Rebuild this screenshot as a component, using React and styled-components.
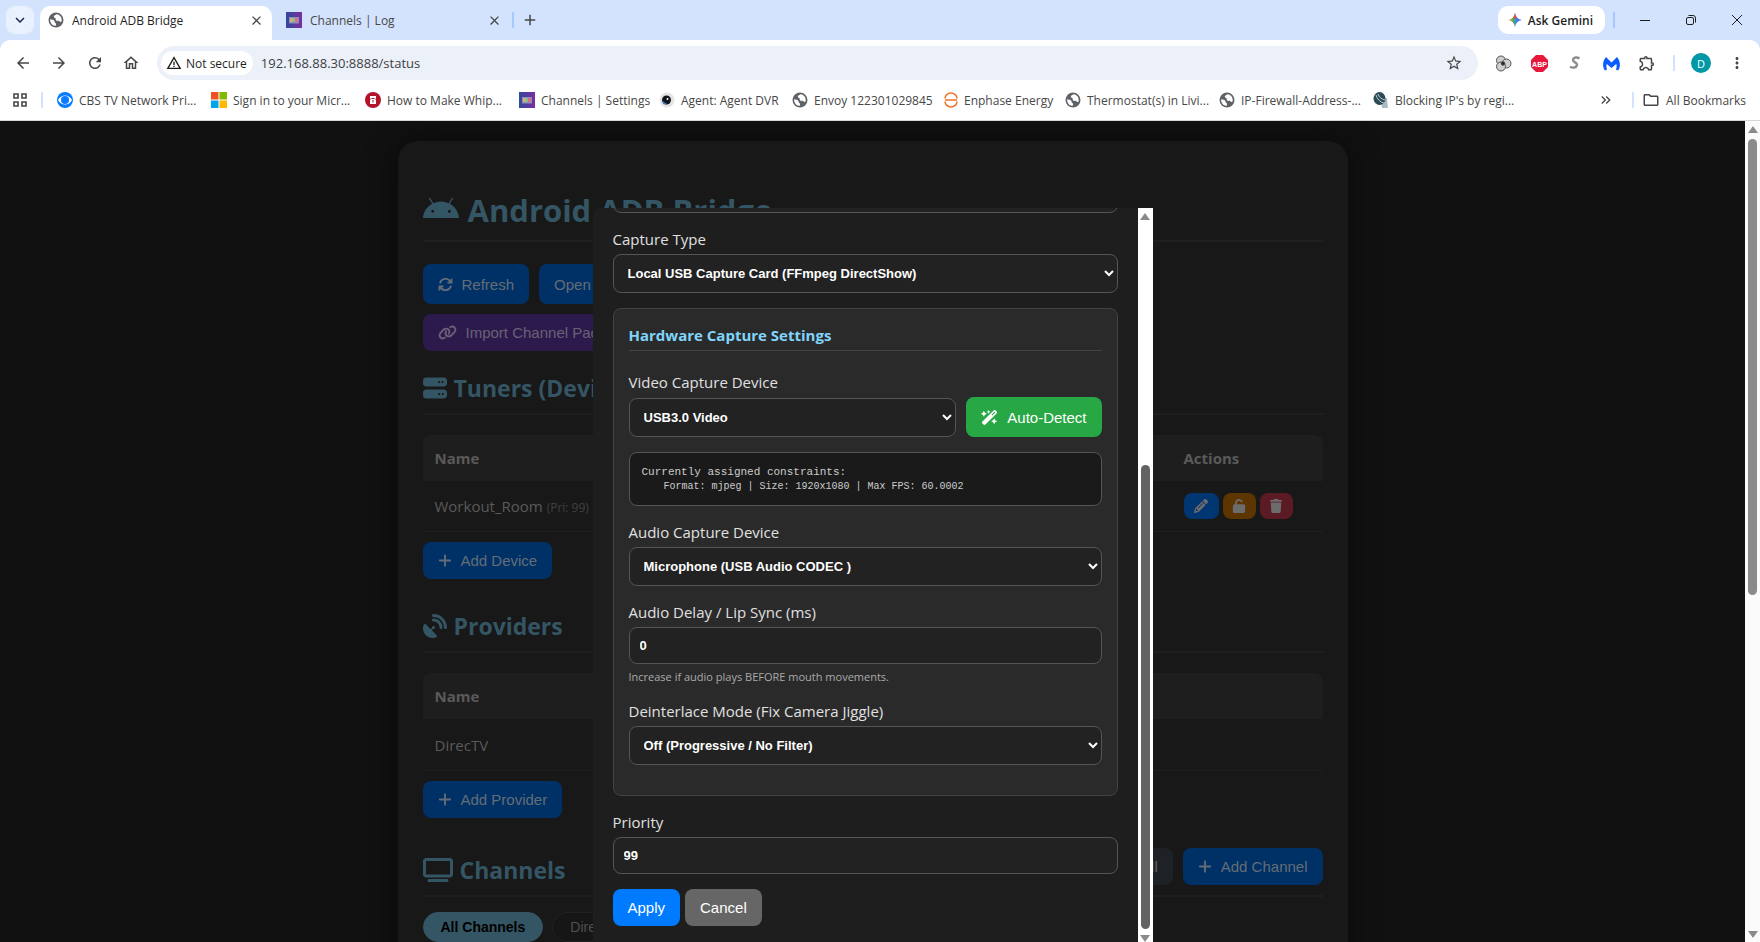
import React from 'react';
import styled, { createGlobalStyle } from 'styled-components';
import {
  FaAndroid,
  FaArrowsRotate,
  FaLink,
  FaPencil,
  FaPlus,
  FaSatelliteDish,
  FaServer,
  FaTrash,
  FaTv,
  FaUnlock,
  FaWandMagicSparkles,
} from 'react-icons/fa6';
import {
  MdAdd,
  MdArrowBack,
  MdArrowForward,
  MdClose,
  MdKeyboardArrowDown,
  MdKeyboardDoubleArrowRight,
  MdMoreVert,
  MdOutlineExtension,
  MdOutlineFolder,
  MdOutlineHome,
  MdRefresh,
  MdStarBorder,
  MdWarningAmber,
} from 'react-icons/md';

const uiFont = '"Open Sans", "Noto Sans", sans-serif';
const arial = '"Liberation Sans", Arial, sans-serif';

const GlobalStyle = createGlobalStyle`
  * {
    box-sizing: border-box;
  }

  body {
    margin: 0;
    font-family: ${uiFont};
    font-size: 15px;
    background: #111;
  }

  button {
    border: 0;
    margin: 0;
    cursor: pointer;
  }
`;

const Window = styled.div`
  height: 100vh;
  display: flex;
  flex-direction: column;
  overflow: hidden;
`;

/* browser chrome */

const TabStrip = styled.div`
  flex: none;
  display: flex;
  align-items: center;
  height: 40px;
  padding: 0 15px 0 6px;
  background: #d3e3fd;
  color: #1f1f1f;
  font-size: 12px;
`;

const TabSearch = styled.button`
  display: flex;
  align-items: center;
  justify-content: center;
  width: 28px;
  height: 28px;
  padding: 0;
  border-radius: 9px;
  background: #e9f0fe;
  color: #1b2a4e;
  font-size: 18px;

  svg {
    stroke: currentColor;
  }
`;

const Tab = styled.div`
  display: flex;
  align-items: center;
  align-self: flex-end;
  gap: 8px;
  width: ${({ $active }) => ($active ? '232px' : '234px')};
  height: 34px;
  margin-left: 6px;
  padding: 0 8px 6px;
  border-radius: 10px 10px 0 0;
  background: ${({ $active }) => ($active ? '#fff' : 'transparent')};
  color: ${({ $active }) => ($active ? '#1f1f1f' : '#474747')};

  > span {
    flex: 1;
  }
`;

const GlyphButton = styled.button`
  display: flex;
  align-items: center;
  justify-content: center;
  width: ${({ $width }) => $width || 36}px;
  height: 28px;
  padding: 0;
  background: none;
  color: #474747;
  font-size: ${({ $size }) => $size || 18}px;
`;

const Divider = styled.span`
  flex: none;
  width: 2px;
  height: 16px;
  margin: 0 ${({ $gap }) => $gap || 0}px;
  background: ${({ $strong }) => ($strong ? '#a8c7fa' : '#d3e3fd')};
`;

const Spacer = styled.span`
  flex: 1;
`;

const Gemini = styled.button`
  display: flex;
  align-items: center;
  gap: 6px;
  height: 28px;
  padding: 0 12px 0 10px;
  border-radius: 10px;
  background: #fff;
  color: #1f1f1f;
  font-family: ${uiFont};
  font-size: 12px;
  font-weight: 600;
`;

const WindowButtons = styled.div`
  display: flex;
  gap: 30px;
  margin-left: 14px;
`;

const ToolbarWrap = styled.div`
  flex: none;
  background: #d3e3fd;
`;

const Toolbar = styled.div`
  display: flex;
  align-items: center;
  height: 46px;
  padding: 0 5px;
  border-radius: 10px 10px 0 0;
  background: #fff;
`;

const Omnibox = styled.div`
  flex: 1;
  display: flex;
  align-items: center;
  height: 34px;
  margin: 0 7px 0 8px;
  padding: 0 6px 0 4px;
  border-radius: 17px;
  background: #ecf0f9;
`;

const SecurityChip = styled.button`
  display: flex;
  align-items: center;
  gap: 4px;
  height: 24px;
  padding: 0 6px 0 5px;
  border-radius: 12px;
  background: #fff;
  color: #1f1f1f;
  font-family: ${uiFont};
  font-size: 12px;
  font-weight: 500;
`;

const Address = styled.input`
  flex: 1;
  margin-left: 6px;
  padding: 0 2px;
  border: 0;
  outline: 0;
  background: transparent;
  color: #3c3f43;
  font-family: ${uiFont};
  font-size: 13px;
`;

const Avatar = styled.button`
  width: 20px;
  height: 20px;
  margin: 0 8px;
  padding: 0;
  border-radius: 50%;
  background: #0097a7;
  color: #fff;
  font-family: ${uiFont};
  font-size: 11px;
`;

const Bookmarks = styled.nav`
  flex: none;
  display: flex;
  align-items: center;
  height: 35px;
  padding: 0 14px 6px 13px;
  border-bottom: 1px solid #d5d5d5;
  background: #fff;
  color: #474747;
  font-size: 12px;
`;

const Bookmark = styled.a`
  display: flex;
  align-items: center;
  gap: 6px;
  width: ${({ $width }) => ($width ? `${$width}px` : 'auto')};
  color: inherit;
  text-decoration: none;
  white-space: nowrap;

  svg {
    flex: none;
  }
`;

/* page */

const Viewport = styled.div`
  flex: 1;
  min-height: 0;
  display: flex;
`;

const Page = styled.main`
  position: relative;
  flex: 1;
  overflow: hidden;
  padding: 20px 0;
  background: #111;
`;

const Container = styled.div`
  max-width: 950px;
  min-height: 1200px;
  margin: 0 auto;
  padding: 25px;
  border-radius: 20px;
  background: #181818;
  box-shadow: 0 0 30px rgba(0, 0, 0, 0.5);
  color: #5a5a5a;
`;

const AndroidIcon = styled(FaAndroid)`
  width: 36px;
  height: 32px;
`;

const ServerIcon = styled(FaServer)`
  width: 24px;
  height: 24px;
`;

const ProvidersIcon = styled(FaSatelliteDish)`
  width: 24px;
  height: 24px;
`;

const TvIcon = styled(FaTv)`
  width: 30px;
  height: 24px;
`;

const PlusIcon = styled(FaPlus)`
  width: 14px;
`;

const LinkIcon = styled(FaLink)`
  width: 19px;
`;

const WandIcon = styled(FaWandMagicSparkles)`
  width: 17px;
`;

const Title = styled.h1`
  display: flex;
  align-items: center;
  gap: 9px;
  height: 56px;
  margin: 20px 0 22px;
  padding-bottom: 6px;
  border-bottom: 2px solid #1f1f1f;
  color: #345564;
  font-size: 31px;
`;

const SectionTitle = styled.h2`
  display: flex;
  align-items: center;
  gap: 7px;
  height: ${({ $tall }) => ($tall ? 49 : 44)}px;
  margin: ${({ $top }) => $top}px 0 ${({ $bottom }) => $bottom || 20}px;
  padding-bottom: ${({ $tall }) => ($tall ? 4 : 9)}px;
  border-bottom: 2px solid #1f1f1f;
  color: #345564;
  font-size: 23px;
`;

const ButtonRow = styled.div`
  display: flex;
  gap: 10px;
  margin-bottom: 10px;
`;

const tones = {
  blue: ['#003166', '#646d77'],
  purple: ['#2c1a4d', '#6a6175'],
  slate: ['#1e2125', '#5c6064'],
  green: ['#28a745', '#fff'],
  primary: ['#007bff', '#fff'],
  grey: ['#666', '#fff'],
};

const Button = styled.button`
  display: flex;
  align-items: center;
  justify-content: center;
  gap: 9px;
  height: ${({ $large }) => ($large ? 40 : 37)}px;
  padding: 0 15px;
  border-radius: 8px;
  background: ${({ $tone }) => tones[$tone][0]};
  color: ${({ $tone }) => tones[$tone][1]};
  font-family: ${arial};
  font-size: 15px;
  font-weight: normal;
  white-space: nowrap;
`;

const LinkButton = styled(Button).attrs({ as: 'a', href: '#' })`
  text-decoration: none;
`;

const HeaderButtons = styled.div`
  display: flex;
  align-self: flex-start;
  gap: 10px;
  margin-left: auto;
`;

const Table = styled.table`
  width: 100%;
  border-collapse: separate;
  border-spacing: 0;
  margin-bottom: 10px;

  th {
    height: 46px;
    padding: 0 12px;
    background: #1e1e1e;
    text-align: left;
  }

  th:first-child {
    border-radius: 8px 0 0 0;
  }

  th:last-child {
    width: 151px;
    border-radius: 0 8px 0 0;
  }

  td {
    height: ${({ $rowHeight }) => $rowHeight}px;
    padding: 0 12px;
    border-bottom: 1px solid #1f1f1f;
  }

  small {
    color: #404040;
    font-size: 12px;
  }
`;

const Actions = styled.div`
  display: flex;
  gap: 4px;
`;

const IconButton = styled.button`
  display: flex;
  align-items: center;
  justify-content: center;
  width: ${({ $wide }) => ($wide ? 35 : 33)}px;
  height: 26px;
  padding: 0;
  border-radius: 8px;
  background: ${({ $color }) => $color};
  color: #6c6c6c;
  font-size: 14px;
`;

const Chips = styled.div`
  display: flex;
  gap: 9px;
`;

const Chip = styled.button`
  height: 30px;
  padding: 0 17px;
  border: 1px solid ${({ $active }) => ($active ? '#345564' : '#222')};
  border-radius: 15px;
  background: ${({ $active }) => ($active ? '#345564' : '#161616')};
  color: ${({ $active }) => ($active ? '#000' : '#505050')};
  font-family: ${arial};
  font-size: 14px;
  font-weight: ${({ $active }) => ($active ? 'bold' : 'normal')};
`;

/* modal */

const Backdrop = styled.div`
  position: absolute;
  inset: 0;
  display: flex;
  justify-content: center;
  padding-top: 87px;
`;

const Modal = styled.div`
  display: flex;
  width: 560px;
  border-radius: 8px 0 0 0;
  overflow: hidden;
  background: #1e1e1e;
  color: #e0e0e0;
`;

const Form = styled.form`
  flex: 1;
  display: flex;
  flex-direction: column;
  justify-content: flex-end;
  overflow: hidden;
  padding: 0 20px 16px;
`;

const Field = styled.div`
  flex: none;
  display: flex;
  flex-direction: column;
  margin-bottom: 15px;
`;

const Label = styled.label`
  margin-bottom: 3px;
  line-height: 23px;
`;

const Input = styled.input`
  width: 100%;
  height: 37px;
  padding: 0 10px;
  border: 1px solid #555;
  border-radius: 8px;
  background: #222;
  color: #fff;
  font-family: ${arial};
  font-size: 13px;
  font-weight: bold;
`;

const Select = styled.select`
  width: 100%;
  height: 39px;
  padding: 0 10px;
  border: 1px solid #555;
  border-radius: 8px;
  background: #222;
  color: #fff;
  font-family: ${arial};
  font-size: 13px;
  font-weight: bold;
`;

const Panel = styled.section`
  flex: none;
  margin-bottom: 15px;
  padding: 15px;
  border: 1px solid #444;
  border-radius: 8px;
  background: #2a2a2a;
`;

const PanelTitle = styled.h3`
  margin: 0 0 20px;
  padding-bottom: 3px;
  border-bottom: 1px solid #444;
  color: #81d4fa;
  font-size: 15px;
  line-height: 23px;
`;

const Inline = styled.div`
  display: flex;
  align-items: flex-end;
  gap: 10px;
`;

const Constraints = styled.div`
  margin-bottom: 15px;
  padding: 12px 12px 11px;
  border: 1px solid #555;
  border-radius: 8px;
  background: #1a1a1a;
  color: #ccc;
  font-family: "Liberation Mono", monospace;
  font-size: 11px;
  line-height: 14px;

  p {
    margin: 0;
  }

  p + p {
    padding-left: 22px;
    font-size: 10px;
    line-height: 15px;
  }
`;

const Hint = styled.small`
  margin-top: 5px;
  color: #aaa;
  font-size: 11px;
  line-height: 16px;
`;

const FormButtons = styled.div`
  flex: none;
  display: flex;
  gap: 5px;
`;

/* scrollbars */

const Track = styled.div`
  flex: none;
  display: flex;
  flex-direction: column;
  align-items: center;
  width: 15px;
  padding: 5px 0 ${({ $page }) => ($page ? 4 : 0)}px;
  background: ${({ $page }) => ($page ? '#fbfbfb' : '#fff')};
`;

const Arrow = styled.i`
  border: 5px solid transparent;
  border-top: ${({ $down }) => ($down ? '7px solid #8b8b8b' : '0')};
  border-bottom: ${({ $down }) => ($down ? '0' : '7px solid #8b8b8b')};
`;

const Thumb = styled.div`
  flex: ${({ $size }) => $size};
  width: 9px;
  margin: 6px 0;
  border-radius: 5px;
  background: ${({ $color }) => $color};
`;

const Gap = styled.div`
  flex: ${({ $size }) => $size};
`;

const Globe = () => (
  <svg width="16" height="16" viewBox="0 0 16 16">
    <circle cx="8" cy="8" r="7.500" fill="#5f6368" />
    <path
      fill="#fff"
      d="M8.600 2.200C7.500 3 6 3.200 5.800 4.400c-.2 1.400 1.600 1.200 2 2.200.3.900-.6 1.300.4 2 1.200.8 2.600-.3 3.400.8.500.8 1.500.6 2.100-.2.500-3.600-1.700-6.400-5.100-7z"
    />
    <path
      fill="#fff"
      d="M2.200 7.200c1.300.2 3.200.3 4 1.500.6 1 .2 1.800 1.200 2.300.9.500.9 1.200.3 2.800-3.500 0-6-3.200-5.500-6.600z"
    />
  </svg>
);

const ChannelsIcon = () => (
  <svg width="16" height="16" viewBox="0 0 16 16">
    <defs>
      <linearGradient id="channels" x1="0" x2="1">
        <stop offset="0" stopColor="#2f4a9c" />
        <stop offset="1" stopColor="#7b2fa0" />
      </linearGradient>
    </defs>
    <path fill="url(#channels)" d="M0 0h16v16H0z" />
    <path fill="#8b8fb8" d="M3 5h10v6.500H3z" />
    <path fill="#c9b27c" d="M4 6h3v4H4z" />
    <path fill="#7fc09c" d="M7 6h2v4H7z" />
    <path fill="#d8708c" d="M9 6h3v4H9z" />
  </svg>
);

const CbsIcon = () => (
  <svg width="16" height="16" viewBox="0 0 16 16">
    <circle cx="8" cy="8" r="8" fill="#0a7cff" />
    <path fill="#fff" d="M1 8c3-6 11-6 14 0-3 6-11 6-14 0z" />
    <circle cx="8" cy="8" r="4" fill="#0a7cff" />
  </svg>
);

const MicrosoftIcon = () => (
  <svg width="16" height="16" viewBox="0 0 16 16">
    <path fill="#f25022" d="M0 0h7.500v7.500H0z" />
    <path fill="#7fba00" d="M8.500 0H16v7.500H8.500z" />
    <path fill="#00a4ef" d="M0 8.500h7.500V16H0z" />
    <path fill="#ffb900" d="M8.500 8.500H16V16H8.500z" />
  </svg>
);

const RecipeIcon = () => (
  <svg width="16" height="16" viewBox="0 0 16 16">
    <circle cx="8" cy="8" r="8" fill="#b3122b" />
    <path fill="#fff" d="M5 4h6v2.500l-1 .5 1 1v4H5V8l1-1-1-.5z" />
    <path stroke="#b3122b" d="M6.500 6.500h3M8 8v2.500" />
  </svg>
);

const AgentIcon = () => (
  <svg width="16" height="16" viewBox="0 0 16 16">
    <circle cx="8" cy="8" r="7.500" fill="#e4e4e4" />
    <circle cx="7.500" cy="8" r="4.500" fill="#10151c" />
    <path stroke="#2f78c8" strokeWidth="1.500" fill="none" d="M4 9.500a4 4 0 0 0 3.500 2.500" />
    <circle cx="8.500" cy="7" r="1" fill="#fff" />
  </svg>
);

const EnphaseIcon = () => (
  <svg width="14" height="16" viewBox="0 0 14 16" fill="none" stroke="#f37321" strokeWidth="1.500">
    <path d="M1 6.500a6 5.500 0 0 1 12 0M1 8h12M1 9.500a6 5.500 0 0 0 12 0" />
  </svg>
);

const DishIcon = () => (
  <svg width="16" height="16" viewBox="0 0 16 16">
    <path fill="#a9bcc4" d="M8 9l6-3 1 10H9z" />
    <ellipse cx="6.500" cy="6.500" rx="6" ry="6.500" fill="#2d4a57" />
    <path stroke="#b9c9d0" fill="none" d="M3 3c1 4 4 7 8 8M5 2c1 3 3 5 7 6" />
  </svg>
);

const GeminiIcon = () => (
  <svg width="14" height="14" viewBox="0 0 14 14">
    <defs>
      <linearGradient id="gemini" x1="0" y1="0" x2="1" y2="0">
        <stop offset="0" stopColor="#f5b400" />
        <stop offset="0.400" stopColor="#4fa66c" />
        <stop offset="0.600" stopColor="#3c83f5" />
        <stop offset="1" stopColor="#3c70e8" />
      </linearGradient>
    </defs>
    <path fill="url(#gemini)" d="M7 0c.8 4 3 6.200 7 7-4 .8-6.200 3-7 7-.8-4-3-6.200-7-7 4-.8 6.200-3 7-7z" />
    <path fill="#ea4d45" d="M7 0c.5 2.500 1.200 4 2.200 4.900L7 5.500 4.800 4.900C5.800 4 6.500 2.500 7 0z" />
  </svg>
);

const AppsIcon = () => (
  <svg width="14" height="14" viewBox="0 0 14 14" fill="none" stroke="#474747" strokeWidth="1.600">
    <path d="M1 1h4v4H1zM9 1h4v4H9zM1 9h4v4H1zM9 9h4v4H9z" />
  </svg>
);

const SwirlIcon = () => (
  <svg width="17" height="17" viewBox="0 0 17 17" fill="#cfcfcf" stroke="#555">
    <circle cx="6" cy="5.500" r="4.500" />
    <circle cx="11.500" cy="8.500" r="4.500" />
    <circle cx="6" cy="11.500" r="4.500" />
    <circle cx="8" cy="8.500" r="1.800" fill="#222" />
  </svg>
);

const AbpIcon = () => (
  <svg width="17" height="17" viewBox="0 0 17 17">
    <path fill="#e6193c" d="M5 0h7l5 5v7l-5 5H5l-5-5V5z" />
    <text x="8.500" y="11.500" textAnchor="middle" fill="#fff" fontFamily={arial} fontSize="7" fontWeight="bold">
      ABP
    </text>
  </svg>
);

const ScriptIcon = () => (
  <svg width="12" height="14" viewBox="0 0 12 14" fill="none" stroke="#8e8e8e" strokeWidth="2.400">
    <path d="M10.500 2.500C8 .8 4.500 1.200 4 3.800c-.4 2.700 4.500 2.500 4 5.200-.5 2.800-4.500 3.300-7 1.800" />
  </svg>
);

const MalwareIcon = () => (
  <svg width="17" height="15" viewBox="0 0 17 15">
    <path
      fill="#0a5cff"
      d="M3 1l5.500 5.500L14 1c3 3.500 4 8.500 1.500 13-1 .5-2 0-2.500-.5.8-2 .8-4 .2-5.500L8.500 12 3.800 8c-.6 1.500-.6 3.500.2 5.500-.5.5-1.500 1-2.500.5C-1 9.500 0 4.500 3 1z"
    />
  </svg>
);

const MinimizeIcon = () => (
  <svg width="16" height="16" stroke="#1f1f1f" fill="none">
    <path d="M3 8.500h10" />
  </svg>
);

const RestoreIcon = () => (
  <svg width="16" height="16" stroke="#1f1f1f" fill="none">
    <rect x="3.500" y="5.500" width="7" height="7" rx="1.500" />
    <path d="M5.500 3.500h4.500a2.500 2.500 0 0 1 2.500 2.500v4.500" />
  </svg>
);

const CloseIcon = () => (
  <svg width="16" height="16" stroke="#1f1f1f" fill="none">
    <path d="M3 3l10 10M13 3L3 13" />
  </svg>
);

const bookmarks = [
  { label: 'CBS TV Network Pri...', Icon: CbsIcon, width: 154 },
  { label: 'Sign in to your Micr...', Icon: MicrosoftIcon, width: 154 },
  { label: 'How to Make Whip...', Icon: RecipeIcon, width: 154 },
  { label: 'Channels | Settings', Icon: ChannelsIcon, width: 140 },
  { label: 'Agent: Agent DVR', Icon: AgentIcon, width: 133 },
  { label: 'Envoy 122301029845', Icon: Globe, width: 152 },
  { label: 'Enphase Energy', Icon: EnphaseIcon, width: 121 },
  { label: 'Thermostat(s) in Livi...', Icon: Globe, width: 154 },
  { label: 'IP-Firewall-Address-...', Icon: Globe, width: 154 },
  { label: "Blocking IP's by regi...", Icon: DishIcon, width: 154 },
];

const BrowserChrome = () => (
  <>
    <TabStrip>
      <TabSearch aria-label="Search tabs">
        <MdKeyboardArrowDown />
      </TabSearch>
      <Tab $active>
        <Globe />
        <span>Android ADB Bridge</span>
        <GlyphButton $width={16} $size={15} aria-label="Close tab">
          <MdClose />
        </GlyphButton>
      </Tab>
      <Tab>
        <ChannelsIcon />
        <span>Channels | Log</span>
        <GlyphButton $width={20} $size={15} aria-label="Close tab">
          <MdClose />
        </GlyphButton>
      </Tab>
      <Divider $strong />
      <GlyphButton $width={32} aria-label="New tab">
        <MdAdd />
      </GlyphButton>
      <Spacer />
      <Gemini>
        <GeminiIcon />
        Ask Gemini
      </Gemini>
      <Divider $gap={8} $strong />
      <WindowButtons>
        <GlyphButton $width={16} aria-label="Minimize">
          <MinimizeIcon />
        </GlyphButton>
        <GlyphButton $width={16} aria-label="Restore">
          <RestoreIcon />
        </GlyphButton>
        <GlyphButton $width={16} aria-label="Close">
          <CloseIcon />
        </GlyphButton>
      </WindowButtons>
    </TabStrip>
    <ToolbarWrap>
      <Toolbar>
        <GlyphButton aria-label="Back">
          <MdArrowBack />
        </GlyphButton>
        <GlyphButton aria-label="Forward">
          <MdArrowForward />
        </GlyphButton>
        <GlyphButton aria-label="Reload">
          <MdRefresh />
        </GlyphButton>
        <GlyphButton aria-label="Home">
          <MdOutlineHome />
        </GlyphButton>
        <Omnibox>
          <SecurityChip>
            <MdWarningAmber size={16} />
            Not secure
          </SecurityChip>
          <Address aria-label="Address" defaultValue="192.168.88.30:8888/status" />
          <GlyphButton aria-label="Bookmark this page">
            <MdStarBorder />
          </GlyphButton>
        </Omnibox>
        <GlyphButton aria-label="Extension">
          <SwirlIcon />
        </GlyphButton>
        <GlyphButton aria-label="Extension">
          <AbpIcon />
        </GlyphButton>
        <GlyphButton aria-label="Extension">
          <ScriptIcon />
        </GlyphButton>
        <GlyphButton aria-label="Extension">
          <MalwareIcon />
        </GlyphButton>
        <GlyphButton aria-label="Extensions">
          <MdOutlineExtension />
        </GlyphButton>
        <Divider $gap={8} />
        <Avatar>D</Avatar>
        <GlyphButton aria-label="Menu">
          <MdMoreVert />
        </GlyphButton>
      </Toolbar>
    </ToolbarWrap>
    <Bookmarks>
      <AppsIcon />
      <Divider $gap={14} />
      {bookmarks.map(({ label, Icon, width }) => (
        <Bookmark href="#" key={label} $width={width}>
          <Icon />
          {label}
        </Bookmark>
      ))}
      <Spacer />
      <GlyphButton $size={16} aria-label="More bookmarks">
        <MdKeyboardDoubleArrowRight />
      </GlyphButton>
      <Divider $gap={8} />
      <Bookmark href="#">
        <MdOutlineFolder size={18} />
        All Bookmarks
      </Bookmark>
    </Bookmarks>
  </>
);

const StatusPage = () => (
  <Container>
    <Title>
      <AndroidIcon />
      Android ADB Bridge
    </Title>
    <ButtonRow>
      <Button $tone="blue" $large>
        <FaArrowsRotate />
        Refresh
      </Button>
      <LinkButton $tone="blue" $large>
        Open
      </LinkButton>
    </ButtonRow>
    <ButtonRow>
      <Button $tone="purple">
        <LinkIcon />
        Import Channel Pack
      </Button>
    </ButtonRow>
    <SectionTitle $top={20}>
      <ServerIcon />
      Tuners (Devices)
    </SectionTitle>
    <Table $rowHeight={51}>
      <thead>
        <tr>
          <th>Name</th>
          <th>Actions</th>
        </tr>
      </thead>
      <tbody>
        <tr>
          <td>
            Workout_Room <small>(Pri: 99)</small>
          </td>
          <td>
            <Actions>
              <IconButton $wide $color="#003672" aria-label="Edit">
                <FaPencil />
              </IconButton>
              <IconButton $color="#5c3500" aria-label="Unlock">
                <FaUnlock />
              </IconButton>
              <IconButton $color="#5c1a24" aria-label="Delete">
                <FaTrash />
              </IconButton>
            </Actions>
          </td>
        </tr>
      </tbody>
    </Table>
    <ButtonRow>
      <Button $tone="blue">
        <PlusIcon />
        Add Device
      </Button>
    </ButtonRow>
    <SectionTitle $top={30}>
      <ProvidersIcon />
      Providers
    </SectionTitle>
    <Table $rowHeight={52}>
      <thead>
        <tr>
          <th>Name</th>
          <th />
        </tr>
      </thead>
      <tbody>
        <tr>
          <td>DirecTV</td>
          <td />
        </tr>
      </tbody>
    </Table>
    <ButtonRow>
      <Button $tone="blue">
        <PlusIcon />
        Add Provider
      </Button>
    </ButtonRow>
    <SectionTitle $top={30} $bottom={15} $tall>
      <TvIcon />
      Channels
      <HeaderButtons>
        <Button $tone="slate">All</Button>
        <Button $tone="blue">
          <PlusIcon />
          Add Channel
        </Button>
      </HeaderButtons>
    </SectionTitle>
    <Chips>
      <Chip $active>All Channels</Chip>
      <Chip>DirecTV</Chip>
    </Chips>
  </Container>
);

const DeviceModal = () => (
  <Backdrop>
    <Modal role="dialog" aria-label="Device">
      <Form onSubmit={e => e.preventDefault()}>
        <Field>
          <Input aria-label="Device address" />
        </Field>
        <Field>
          <Label htmlFor="captureType">Capture Type</Label>
          <Select id="captureType">
            <option>Local USB Capture Card (FFmpeg DirectShow)</option>
          </Select>
        </Field>
        <Panel>
          <PanelTitle>Hardware Capture Settings</PanelTitle>
          <Field>
            <Label htmlFor="videoDevice">Video Capture Device</Label>
            <Inline>
              <Select id="videoDevice">
                <option>USB3.0 Video</option>
              </Select>
              <Button type="button" $tone="green" $large>
                <WandIcon />
                Auto-Detect
              </Button>
            </Inline>
          </Field>
          <Constraints>
            <p>Currently assigned constraints:</p>
            <p>Format: mjpeg | Size: 1920x1080 | Max FPS: 60.0002</p>
          </Constraints>
          <Field>
            <Label htmlFor="audioDevice">Audio Capture Device</Label>
            <Select id="audioDevice">
              <option>Microphone (USB Audio CODEC )</option>
            </Select>
          </Field>
          <Field>
            <Label htmlFor="audioDelay">Audio Delay / Lip Sync (ms)</Label>
            <Input id="audioDelay" defaultValue="0" />
            <Hint>Increase if audio plays BEFORE mouth movements.</Hint>
          </Field>
          <Field>
            <Label htmlFor="deinterlace">Deinterlace Mode (Fix Camera Jiggle)</Label>
            <Select id="deinterlace">
              <option>Off (Progressive / No Filter)</option>
            </Select>
          </Field>
        </Panel>
        <Field>
          <Label htmlFor="priority">Priority</Label>
          <Input id="priority" defaultValue="99" />
        </Field>
        <FormButtons>
          <Button $tone="primary">Apply</Button>
          <Button type="button" $tone="grey">
            Cancel
          </Button>
        </FormButtons>
      </Form>
      <Track>
        <Arrow />
        <Gap $size={34} />
        <Thumb $size={66} $color="#636363" />
        <Arrow $down />
      </Track>
    </Modal>
  </Backdrop>
);

export default function App() {
  return (
    <Window>
      <GlobalStyle />
      <BrowserChrome />
      <Viewport>
        <Page>
          <StatusPage />
          <DeviceModal />
        </Page>
        <Track $page>
          <Arrow />
          <Thumb $size={58} $color="#8b8b8b" />
          <Gap $size={42} />
          <Arrow $down />
        </Track>
      </Viewport>
    </Window>
  );
}
